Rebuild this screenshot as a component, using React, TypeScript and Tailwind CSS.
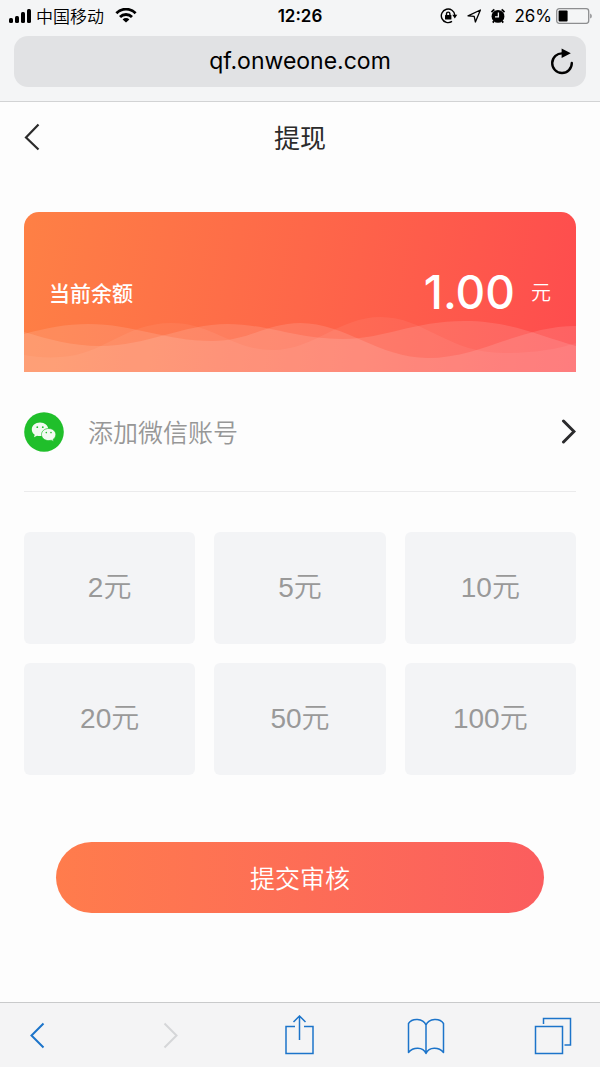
import { useState } from "react";

const amounts = [2, 5, 10, 20, 50, 100];

function StatusBar() {
  return (
    <div className="grid grid-cols-[1fr_auto_1fr] items-center h-8 px-2 text-black">
      <div className="flex items-center gap-1">
        <svg className="w-6 h-4" viewBox="0 0 24 16" fill="currentColor">
          <rect x="1" y="10" width="4" height="5" rx="1.5" />
          <rect x="7" y="8" width="4" height="7" rx="1.5" />
          <rect x="13" y="4" width="4" height="11" rx="1.5" />
          <rect x="19" y="1" width="4" height="14" rx="1.5" />
        </svg>
        <span className="text-[17px] leading-6 font-[350]">中国移动</span>
        <svg
          className="w-6 h-4 ml-1.5"
          viewBox="0 0 24 16"
          fill="none"
          stroke="currentColor"
          strokeWidth="2.8"
        >
          <path d="M2.4 5.2A13.4 13.4 0 0 1 21.6 5.2" />
          <path d="M6 9A8.4 8.4 0 0 1 18 9" />
          <path d="M12 14.6 8.6 11.5A4.8 4.8 0 0 1 15.4 11.5Z" fill="currentColor" stroke="none" />
        </svg>
      </div>
      <span className="font-[Inter] text-[17px] leading-6 font-semibold">12:26</span>
      <div className="flex items-center justify-end gap-2">
        <svg className="w-[18px] h-4" viewBox="0 0 18 16" fill="none" stroke="currentColor" strokeWidth="1.4">
          <path d="M12 13.4A6.8 6.8 0 1 1 14.9 7.2" />
          <path d="M12.3 6.8h5L14.8 10.4Z" fill="currentColor" stroke="none" />
          <rect x="5" y="7" width="6.4" height="4.6" rx=".5" fill="currentColor" stroke="none" />
          <path d="M6.5 7.4V5.8a1.7 1.7 0 0 1 3.4 0v1.6" />
        </svg>
        <svg className="w-4 h-4" viewBox="0 0 16 16" fill="none" stroke="currentColor" strokeWidth="1.3">
          <path d="M14.4 2 9.4 14 8.2 8.4 2 7.8Z" strokeLinejoin="round" />
        </svg>
        <svg className="w-4 h-4" viewBox="0 0 16 16" fill="currentColor">
          <circle cx="8" cy="8.4" r="6.4" />
          <path
            d="M1.6 4.2A9 9 0 0 1 4.4 1.6M14.4 4.2A9 9 0 0 0 11.6 1.6M4 13 2.8 14.6M12 13l1.2 1.6"
            stroke="currentColor"
            strokeWidth="1.8"
          />
          <path d="M8.4 4.6v4.2H5" fill="none" stroke="#f4f5f6" strokeWidth="1.3" />
        </svg>
        <span className="flex items-center gap-1">
          <span className="font-[Inter] text-[17px] leading-6">26%</span>
          <svg className="w-9 h-4" viewBox="0 0 36 16">
            <rect x=".7" y=".7" width="32" height="14.6" rx="2.5" fill="none" stroke="#8d8e90" strokeWidth="1.3" />
            <rect x="2.6" y="2.6" width="9" height="10.8" rx="1" />
            <path d="M34.2 5.4q1.6.6 1.6 2.6t-1.6 2.6Z" fill="#8d8e90" />
          </svg>
        </span>
      </div>
    </div>
  );
}

function AddressBar() {
  return (
    <div className="px-[14px] pt-1 pb-[14px]">
      <div className="grid grid-cols-[24px_1fr_24px] items-center h-[51px] px-3 rounded-[14px] bg-[#e1e2e4]">
        <span />
        <span className="text-center text-[23px] font-[Inter] text-black">
          qf.onweone.com
        </span>
        <button aria-label="刷新">
          <svg className="w-6 h-7" viewBox="0 0 24 28" fill="none" stroke="#000" strokeWidth="2.4">
            <path d="M12.6 5.4A9.8 9.8 0 1 0 21.8 15" strokeLinecap="round" />
            <path d="M11.6.4v9.600L20.800 5.200Z" fill="#000" stroke="none" />
          </svg>
        </button>
      </div>
    </div>
  );
}

function BalanceCard() {
  return (
    <section className="relative h-40 overflow-hidden rounded-t-[15px] bg-[linear-gradient(100deg,#fe8045_0%,#fe6749_50%,#fe4c4e_100%)]">
      <svg
        className="absolute inset-0 w-full h-full"
        viewBox="0 0 551 160"
        preserveAspectRatio="none"
        fill="#fff"
      >
        <path
          fillOpacity=".12"
          d="M0 122C22 116 42 112 64 112C110 112 140 129 188 129C225 129 242 111 276 111C320 111 355 146 403 146C455 146 496 114 551 114V160H0Z"
        />
        <path
          fillOpacity=".12"
          d="M0 120C24 127 48 134 76 134C122 134 160 112 203 112C243 112 272 127 318 127C360 127 388 109 440 109C485 109 515 124 551 134V160H0Z"
        />
        <path
          fillOpacity=".06"
          d="M0 143C12 145 24 146 36 145C80 143 100 111 147 111C188 111 208 138 248 138C290 138 314 105 356 105C400 105 422 141 480 141C510 141 532 137 551 131V160H0Z"
        />
      </svg>
      <div className="relative flex items-center justify-between h-full px-[25px] text-white">
        <h2 className="text-[21px] leading-8 font-medium">当前余额</h2>
        <p className="flex items-center gap-4">
          <span className="font-[Inter] text-[46px] font-medium">1.00</span>
          <span className="text-xl font-[350]">元</span>
        </p>
      </div>
    </section>
  );
}

function WechatIcon() {
  return (
    <svg className="w-10 h-10" viewBox="0 0 40 40">
      <circle cx="20" cy="20" r="19.8" fill="#20bf2b" />
      <path
        d="M16 10.6c-4.7 0-8.2 3-8.2 6.9 0 2.2 1.1 4 2.9 5.2l-.7 2.5 3-1.5c1 .3 1.9.4 3 .4 4.7 0 8.3-2.9 8.3-6.6 0-3.900-3.600-6.900-8.300-6.900Z"
        fill="#f3fbf2"
      />
      <path
        d="M24.7 16.5c-4.1 0-7.2 2.7-7.2 6 0 3.4 3.1 6.1 7.2 6.1.9 0 1.7-.1 2.5-.4l2.5 1.4-.6-2.2c1.7-1.1 2.7-2.9 2.7-4.9 0-3.300-3.100-6-7.100-6Z"
        fill="#f3fbf2"
        stroke="#20bf2b"
        strokeWidth=".7"
      />
      <g fill="#20bf2b">
        <circle cx="13.3" cy="15.2" r=".9" />
        <circle cx="18.8" cy="15.2" r=".9" />
        <circle cx="22.3" cy="20.6" r=".8" />
        <circle cx="27" cy="20.6" r=".8" />
      </g>
    </svg>
  );
}

function Toolbar() {
  return (
    <nav className="flex items-center justify-between h-[65px] pl-[22px] pr-[27px] border-t border-[#c9cacb] bg-[#f4f4f5] text-[#1c74ca]">
      <button aria-label="后退">
        <svg className="w-10 h-10" viewBox="0 0 40 40" fill="none" stroke="currentColor" strokeWidth="2">
          <path d="M21.5 8.5 9.5 20.5l12 12" />
        </svg>
      </button>
      <button aria-label="前进" disabled className="text-[#d5d6d8]">
        <svg className="w-10 h-10" viewBox="0 0 40 40" fill="none" stroke="currentColor" strokeWidth="2">
          <path d="M14.5 8.5 26.5 20.5l-12 12" />
        </svg>
      </button>
      <button aria-label="分享">
        <svg className="w-10 h-10" viewBox="0 0 40 40" fill="none" stroke="currentColor" strokeWidth="1.5">
          <path d="M17 11.5H8V38.5h27V11.5h-9M21.5 25V1M15.5 7l6-6 6 6" />
        </svg>
      </button>
      <button aria-label="书签">
        <svg className="w-10 h-10" viewBox="0 0 40 40" fill="none" stroke="currentColor" strokeWidth="1.5" strokeLinejoin="round">
          <path d="M21 10C18 3 7 3 3.5 8.5v29C8 32 18 31.5 21 38.5c3-7 13-6.5 17.5-1V8.5C35 3 24 3 21 10ZM21 10v28.5" />
        </svg>
      </button>
      <button aria-label="标签页">
        <svg className="w-10 h-10" viewBox="0 0 40 40" fill="none" stroke="currentColor" strokeWidth="1.5">
          <path d="M2.5 11.5h27v27h-27ZM10.5 9V3.5h27V30h-6" />
        </svg>
      </button>
    </nav>
  );
}

export default function App() {
  const [selected, setSelected] = useState<number | null>(null);

  return (
    <div className="flex flex-col min-h-screen bg-[#fdfdfd] font-['Noto_Sans_CJK_SC',sans-serif]">
      <header className="border-b border-[#d2d3d4] bg-[#f4f5f6]">
        <StatusBar />
        <AddressBar />
      </header>

      <main className="flex-1 px-6">
        <div className="grid grid-cols-[24px_1fr_24px] items-center h-[70px]">
          <button aria-label="返回">
            <svg className="w-5 h-7" viewBox="0 0 20 28" fill="none" stroke="#2b2b2b" strokeWidth="2.2">
              <path d="M14.5 1.5 2 14.5l12.5 12" />
            </svg>
          </button>
          <h1 className="text-center text-[26px] leading-8 text-[#2b2b2b]">提现</h1>
        </div>

        <div className="pt-10">
          <BalanceCard />
        </div>

        <button className="flex items-center w-full h-[120px] border-b border-[#ebebec]">
          <WechatIcon />
          <span className="flex-1 ml-6 text-left text-[25px] font-[350] text-[#979797]">
            添加微信账号
          </span>
          <svg
            className="w-4 h-7"
            viewBox="0 0 16 28"
            fill="none"
            stroke="#2b2b2d"
            strokeWidth="3"
            strokeLinecap="round"
          >
            <path d="M3.5 3 14 13.5l-10.5 10.5" />
          </svg>
        </button>

        <div className="grid grid-cols-3 gap-[19px] pt-10">
          {amounts.map((amount) => (
            <button
              key={amount}
              aria-pressed={selected === amount}
              onClick={() => setSelected(amount)}
              className="h-28 rounded-md bg-[#f3f4f6] font-['Liberation_Sans','Noto_Sans_CJK_SC',sans-serif] text-[28px] font-[350] text-[#999999]"
            >
              {amount}元
            </button>
          ))}
        </div>

        <div className="px-8 py-[67px]">
          <button className="w-full h-[71px] rounded-full bg-linear-to-r from-[#ff7c4c] to-[#fb5d5e] text-[25px] font-[350] text-white">
            提交审核
          </button>
        </div>
      </main>

      <Toolbar />
    </div>
  );
}
